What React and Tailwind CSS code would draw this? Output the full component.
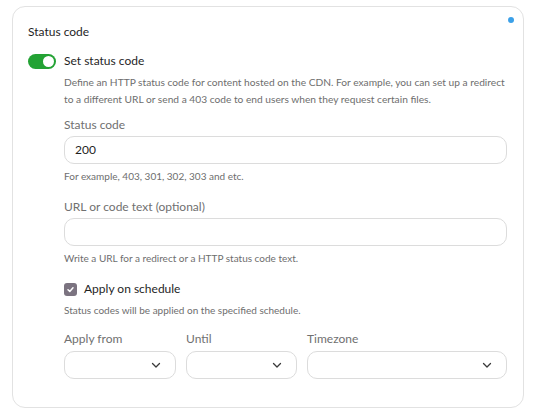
import React, { useState } from "react";

const Chevron = () => (
  <svg width="12" height="12" viewBox="0 0 12 12" fill="none" stroke="#3a3a3a" strokeWidth="1.3" strokeLinecap="round" strokeLinejoin="round">
    <path d="M2.5 4.5 6 8l3.5-3.5" />
  </svg>
);

const Select = ({ className }) => (
  <div className={`h-[28px] border border-[#dcdcdc] rounded-[10px] bg-white flex items-center justify-end pr-[13px] ${className}`}>
    <Chevron />
  </div>
);

const App = () => {
  const [enabled, setEnabled] = useState(true);
  const [scheduled, setScheduled] = useState(true);

  return (
    <div className="w-[534px] h-[418px] bg-white pt-[6px] pl-[12px] font-['Lato',sans-serif]">
      <div className="relative w-[512px] h-[402px] border border-[#e2e2e2] rounded-[13px] pl-[15px] pr-[16px] pt-[16px]">
        {/* unsaved dot */}
        <span className="absolute top-[10px] right-[9px] w-[6px] h-[6px] rounded-full bg-[#3ba0e8]" />

        <h3 className="text-[12px] leading-[18px] text-[#1f1f1f]">Status code</h3>

        {/* toggle row */}
        <div className="mt-[11px] flex items-center gap-[8px]">
          <button
            onClick={() => setEnabled((v) => !v)}
            className={`w-[28px] h-[15px] rounded-full flex items-center px-[2px] ${enabled ? "bg-[#23a234] justify-end" : "bg-gray-300 justify-start"}`}
          >
            <span className="w-[11px] h-[11px] rounded-full bg-white" />
          </button>
          <span className="text-[12px] leading-[18px] text-[#1f1f1f]">Set status code</span>
        </div>

        <div className="pl-[36px]">
          <p className="mt-[4px] text-[10.2px] leading-[17px] text-[#6e6e6e]">
            Define an HTTP status code for content hosted on the CDN. For example, you can set up a redirect to a different URL or send a 403 code to end users when they request certain files.
          </p>

          {/* status code input */}
          <label className="block mt-[9px] text-[12px] leading-[16px] text-[#707070]">Status code</label>
          <div className="mt-[3px] h-[28px] border border-[#dcdcdc] rounded-[10px] flex items-center px-[10px] text-[12px] text-[#1f1f1f]">
            200
          </div>
          <p className="mt-[5px] text-[10px] leading-[14px] text-[#6e6e6e]">For example, 403, 301, 302, 303 and etc.</p>

          {/* url input */}
          <label className="block mt-[16px] text-[12px] leading-[16px] text-[#707070]">URL or code text (optional)</label>
          <div className="mt-[3px] h-[28px] border border-[#dcdcdc] rounded-[10px]" />
          <p className="mt-[5px] text-[10px] leading-[14px] text-[#6e6e6e]">Write a URL for a redirect or a HTTP status code text.</p>

          {/* schedule checkbox */}
          <div className="mt-[15px] flex items-center gap-[7px]">
            <button
              onClick={() => setScheduled((v) => !v)}
              className={`w-[13px] h-[13px] rounded-[3px] flex items-center justify-center ${scheduled ? "bg-[#7b7380]" : "border border-gray-400 bg-white"}`}
            >
              {scheduled && (
                <svg width="9" height="9" viewBox="0 0 9 9" fill="none" stroke="white" strokeWidth="1.5" strokeLinecap="round" strokeLinejoin="round">
                  <path d="M2 4.7 3.8 6.4 7 2.8" />
                </svg>
              )}
            </button>
            <span className="text-[12px] leading-[18px] text-[#1f1f1f]">Apply on schedule</span>
          </div>
          <p className="mt-[5px] text-[10px] leading-[14px] text-[#6e6e6e]">Status codes will be applied on the specified schedule.</p>

          {/* schedule selects */}
          <div className="mt-[14px] flex gap-[10px]">
            <div className="w-[112px]">
              <label className="block text-[12px] leading-[16px] text-[#707070]">Apply from</label>
              <Select className="mt-[4px]" />
            </div>
            <div className="w-[111px]">
              <label className="block text-[12px] leading-[16px] text-[#707070]">Until</label>
              <Select className="mt-[4px]" />
            </div>
            <div className="flex-1">
              <label className="block text-[12px] leading-[16px] text-[#707070]">Timezone</label>
              <Select className="mt-[4px]" />
            </div>
          </div>
        </div>
      </div>
    </div>
  );
};

export default App;
